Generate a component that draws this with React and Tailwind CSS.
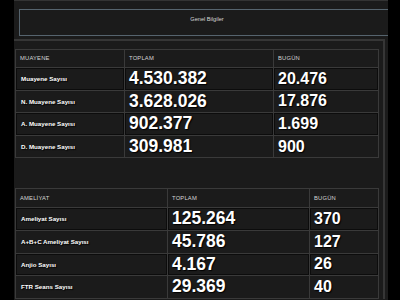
import React from 'react';

const MUAYENE = [
  { label: 'Muayene Sayısı', total: '4.530.382', today: '20.476' },
  { label: 'N. Muayene Sayısı', total: '3.628.026', today: '17.876' },
  { label: 'A. Muayene Sayısı', total: '902.377', today: '1.699' },
  { label: 'D. Muayene Sayısı', total: '309.981', today: '900' },
];

const AMELIYAT = [
  { label: 'Ameliyat Sayısı', total: '125.264', today: '370' },
  { label: 'A+B+C Ameliyat Sayısı', total: '45.786', today: '127' },
  { label: 'Anjio Sayısı', total: '4.167', today: '26' },
  { label: 'FTR Seans Sayısı', total: '29.369', today: '40' },
];

function StatTable({ title, rows, widths, headH }) {
  return (
    <table className="table-fixed border-collapse ml-px w-[363px]">
      <colgroup>
        {widths.map((w, i) => (
          <col key={i} style={{ width: w }} />
        ))}
      </colgroup>
      <thead>
        <tr className={headH}>
          {[title, 'TOPLAM', 'BUGÜN'].map((h) => (
            <th
              key={h}
              className="border border-[#3a3a3a] px-[4px] text-left align-middle text-[5.8px] font-normal text-[#d4d4d4] tracking-[0.2px]"
            >
              {h}
            </th>
          ))}
        </tr>
      </thead>
      <tbody>
        {rows.map((r, i) => {
          const striped = i % 2 === 0;
          const cell = striped ? 'shadow-[inset_0_0_0_1px_#0c0c0c]' : '';
          return (
            <tr key={r.label} className="h-[22.6px]">
              <td className={`border border-[#3a3a3a] px-[5px] pt-[6px] align-top text-[6.2px] font-bold text-white [text-shadow:1px_1px_1px_#000] ${cell}`}>
                {r.label}
              </td>
              <td className={`border border-[#3a3a3a] px-[4px] align-middle text-[17.5px] leading-none font-bold text-white [text-shadow:1px_1px_1px_#000] ${cell}`}>
                {r.total}
              </td>
              <td className={`border border-[#3a3a3a] px-[4px] align-middle text-[16px] leading-none font-bold text-white [text-shadow:1px_1px_1px_#000] ${cell}`}>
                {r.today}
              </td>
            </tr>
          );
        })}
      </tbody>
    </table>
  );
}

export default function App() {
  return (
    <div className="w-[400px] h-[300px] bg-black flex overflow-hidden font-['Liberation_Sans',Arial,sans-serif]">
      <div className="ml-[14px] w-[374px] h-full bg-[#1b1b1b] overflow-hidden border-t border-[#333]">
        <div className="ml-[5px] mt-[8px] w-[376px] h-[27px] border border-[#56646e] flex justify-center pt-[5px]">
          <span className="text-[5.6px] text-[#d8d8d8]">Genel Bilgiler</span>
        </div>
        <div className="mt-[3px] w-[371px] border-t-2 border-r-2 border-[#363636] pt-[8px]">
          <StatTable title="MUAYENE" rows={MUAYENE} widths={['109px', '149px', '105px']} headH="h-[18px]" />
          <div className="h-[30px]" />
          <StatTable title="AMELİYAT" rows={AMELIYAT} widths={['152px', '142px', '69px']} headH="h-[19px]" />
        </div>
      </div>
    </div>
  );
}
